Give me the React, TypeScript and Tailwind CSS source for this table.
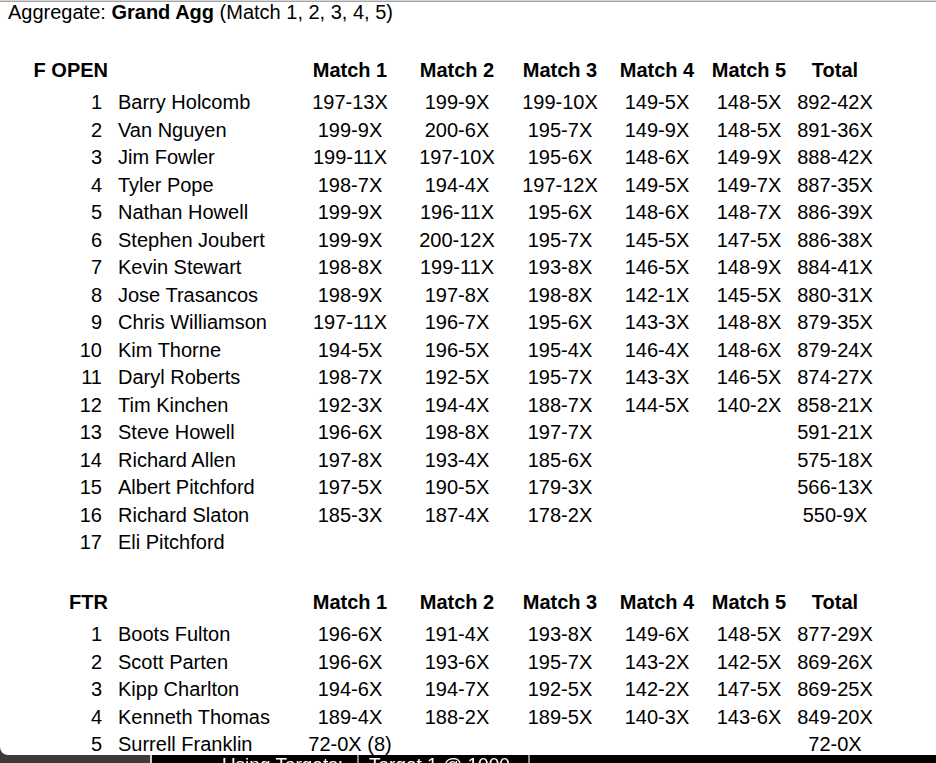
import React from "react";

type Row = [string, string, string, string, string, string, string, string];

const fopen: Row[] = [
  ["1", "Barry Holcomb", "197-13X", "199-9X", "199-10X", "149-5X", "148-5X", "892-42X"],
  ["2", "Van Nguyen", "199-9X", "200-6X", "195-7X", "149-9X", "148-5X", "891-36X"],
  ["3", "Jim Fowler", "199-11X", "197-10X", "195-6X", "148-6X", "149-9X", "888-42X"],
  ["4", "Tyler Pope", "198-7X", "194-4X", "197-12X", "149-5X", "149-7X", "887-35X"],
  ["5", "Nathan Howell", "199-9X", "196-11X", "195-6X", "148-6X", "148-7X", "886-39X"],
  ["6", "Stephen Joubert", "199-9X", "200-12X", "195-7X", "145-5X", "147-5X", "886-38X"],
  ["7", "Kevin Stewart", "198-8X", "199-11X", "193-8X", "146-5X", "148-9X", "884-41X"],
  ["8", "Jose Trasancos", "198-9X", "197-8X", "198-8X", "142-1X", "145-5X", "880-31X"],
  ["9", "Chris Williamson", "197-11X", "196-7X", "195-6X", "143-3X", "148-8X", "879-35X"],
  ["10", "Kim Thorne", "194-5X", "196-5X", "195-4X", "146-4X", "148-6X", "879-24X"],
  ["11", "Daryl Roberts", "198-7X", "192-5X", "195-7X", "143-3X", "146-5X", "874-27X"],
  ["12", "Tim Kinchen", "192-3X", "194-4X", "188-7X", "144-5X", "140-2X", "858-21X"],
  ["13", "Steve Howell", "196-6X", "198-8X", "197-7X", "", "", "591-21X"],
  ["14", "Richard Allen", "197-8X", "193-4X", "185-6X", "", "", "575-18X"],
  ["15", "Albert Pitchford", "197-5X", "190-5X", "179-3X", "", "", "566-13X"],
  ["16", "Richard Slaton", "185-3X", "187-4X", "178-2X", "", "", "550-9X"],
  ["17", "Eli Pitchford", "", "", "", "", "", ""],
];

const ftr: Row[] = [
  ["1", "Boots Fulton", "196-6X", "191-4X", "193-8X", "149-6X", "148-5X", "877-29X"],
  ["2", "Scott Parten", "196-6X", "193-6X", "195-7X", "143-2X", "142-5X", "869-26X"],
  ["3", "Kipp Charlton", "194-6X", "194-7X", "192-5X", "142-2X", "147-5X", "869-25X"],
  ["4", "Kenneth Thomas", "189-4X", "188-2X", "189-5X", "140-3X", "143-6X", "849-20X"],
  ["5", "Surrell Franklin", "72-0X (8)", "", "", "", "", "72-0X"],
];

const cols = "grid grid-cols-[108px_192px_100px_114px_92px_102px_82px_90px]";

function Header({ title }: { title: string }) {
  const heads = ["Match 1", "Match 2", "Match 3", "Match 4", "Match 5", "Total"];
  return (
    <div className={`${cols} h-[32px] leading-[27.5px] font-bold`}>
      <div className="text-right whitespace-nowrap">{title}</div>
      <div />
      {heads.map((h) => (
        <div key={h} className="text-center whitespace-nowrap">
          {h}
        </div>
      ))}
    </div>
  );
}

function DataRow({ r }: { r: Row }) {
  return (
    <div className={`${cols} h-[27.5px] leading-[27.5px]`}>
      <div className="text-right pr-[6px]">{r[0]}</div>
      <div className="pl-[10px] whitespace-nowrap">{r[1]}</div>
      {r.slice(2).map((v, i) => (
        <div key={i} className="text-center whitespace-nowrap">
          {v}
        </div>
      ))}
    </div>
  );
}

export default function App() {
  return (
    <div
      className="min-h-[763px] bg-white text-black text-[20px]"
      style={{ fontFamily: '"Liberation Sans", Arial, sans-serif' }}
    >
      <div className="h-px bg-[#d6d6d6]" />
      <div className="h-px bg-[#a3a3a3]" />
      <div className="pl-[8px] leading-[20px] whitespace-nowrap">
        Aggregate: <b>Grand Agg</b> (Match 1, 2, 3, 4, 5)
      </div>

      <div className="mt-[35.3px]">
        <Header title="F OPEN" />
        {fopen.map((r) => (
          <DataRow key={r[0] + r[1]} r={r} />
        ))}
      </div>

      <div className="mt-[32.5px]">
        <Header title="FTR" />
        {ftr.map((r) => (
          <DataRow key={r[0] + r[1]} r={r} />
        ))}
      </div>

      <div className="fixed left-0 top-[747px] w-[8px] h-[8px] bg-[#3b3b3b]">
        <div className="w-full h-full bg-white rounded-bl-[8px]" />
      </div>

      <div className="fixed left-0 right-0 top-[755px] h-[30px] flex bg-black text-white text-[19px] leading-[19px]">
        <div className="w-[150px] bg-[#3b3b3b]" />
        <div className="w-[207px] border-l-2 border-[#d0d0d0] text-right pr-[14px] whitespace-nowrap">
          Using Targets:
        </div>
        <div className="w-[173px] border-l-2 border-r-2 border-[#8a8a8a] pl-[10px] whitespace-nowrap">
          Target 1 @ 1000
        </div>
        <div className="flex-1" />
      </div>
    </div>
  );
}
